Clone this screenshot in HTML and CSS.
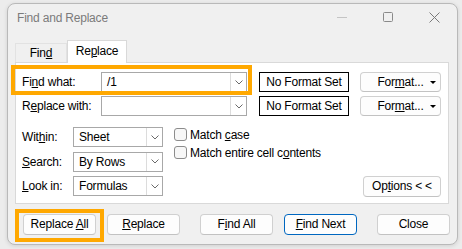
FILE: index.html
```html
<!DOCTYPE html>
<html lang="en">
<head>
    <meta charset="UTF-8">
    <title>Find and Replace</title>
    <link rel="stylesheet" href="styles.css">
</head>
<body>
    <div class="dialog">
        <div class="titlebar">
            <span class="title">Find and Replace</span>
            <div class="controls">
                <span class="ctl"><svg width="10" height="10" viewBox="0 0 10 10"><line x1="0" y1="5.5" x2="10" y2="5.5" stroke="#c4c4c4" stroke-width="1"/></svg></span>
                <span class="ctl"><svg width="10" height="10" viewBox="0 0 10 10"><rect x="0.5" y="0.5" width="9" height="9" rx="1" fill="none" stroke="#8a8a8a" stroke-width="1"/></svg></span>
                <span class="ctl"><svg width="11" height="11" viewBox="0 0 11 11"><path d="M0.5 0.5L10.5 10.5M10.5 0.5L0.5 10.5" stroke="#7a7a7a" stroke-width="1"/></svg></span>
            </div>
        </div>

        <div class="tabs">
            <div class="tab">Fin<u>d</u></div>
            <div class="tab active">Re<u>p</u>lace</div>
        </div>

        <div class="panel">
            <div class="row">
                <span class="label">Fi<u>n</u>d what:</span>
                <div class="combo wide">
                    <span class="value">/1</span>
                    <span class="drop"><svg width="8" height="5" viewBox="0 0 8 5"><path d="M0.5 0.5L4 4L7.5 0.5" fill="none" stroke="#6a6a6a" stroke-width="1"/></svg></span>
                </div>
                <div class="noformat">No Format Set</div>
                <div class="btn format">For<u>m</u>at...<span class="caret"></span></div>
            </div>
            <div class="row">
                <span class="label">R<u>e</u>place with:</span>
                <div class="combo wide">
                    <span class="value"></span>
                    <span class="drop"><svg width="8" height="5" viewBox="0 0 8 5"><path d="M0.5 0.5L4 4L7.5 0.5" fill="none" stroke="#6a6a6a" stroke-width="1"/></svg></span>
                </div>
                <div class="noformat">No Format Set</div>
                <div class="btn format">For<u>m</u>at...<span class="caret"></span></div>
            </div>

            <div class="options">
                <div class="selects">
                    <span class="label">Wit<u>h</u>in:</span>
                    <div class="combo">
                        <span class="value">Sheet</span>
                        <span class="drop"><svg width="8" height="5" viewBox="0 0 8 5"><path d="M0.5 0.5L4 4L7.5 0.5" fill="none" stroke="#6a6a6a" stroke-width="1"/></svg></span>
                    </div>
                    <span class="label"><u>S</u>earch:</span>
                    <div class="combo">
                        <span class="value">By Rows</span>
                        <span class="drop"><svg width="8" height="5" viewBox="0 0 8 5"><path d="M0.5 0.5L4 4L7.5 0.5" fill="none" stroke="#6a6a6a" stroke-width="1"/></svg></span>
                    </div>
                    <span class="label"><u>L</u>ook in:</span>
                    <div class="combo">
                        <span class="value">Formulas</span>
                        <span class="drop"><svg width="8" height="5" viewBox="0 0 8 5"><path d="M0.5 0.5L4 4L7.5 0.5" fill="none" stroke="#6a6a6a" stroke-width="1"/></svg></span>
                    </div>
                </div>
                <div class="checks">
                    <div class="check"><span class="box"></span><span>Match <u>c</u>ase</span></div>
                    <div class="check"><span class="box"></span><span>Match entire cell c<u>o</u>ntents</span></div>
                </div>
                <div class="btn opt">Op<u>t</u>ions &lt; &lt;</div>
            </div>
        </div>

        <div class="actions">
            <div class="btn action">Replace <u>A</u>ll</div>
            <div class="btn action gap-s"><u>R</u>eplace</div>
            <div class="btn action gap-l">F<u>i</u>nd All</div>
            <div class="btn action gap-s primary"><u>F</u>ind Next</div>
            <div class="btn action gap-l">Close</div>
        </div>

        <div class="mark mark-find"></div>
        <div class="mark mark-replace"></div>
    </div>
</body>
</html>
```

FILE: styles.css
```css
:root {
    --dialog-bg: #f0f0f0;
    --panel-border: #d9d9d9;
    --field-border: #a8a8a8;
    --btn-border: #d0d0d0;
    --accent: #0067c0;
    --mark: #ffa800;
}
body {
    margin: 0;
    width: 462px;
    height: 249px;
    overflow: hidden;
    background: #ececec;
    font-family: 'Liberation Sans', Arial, sans-serif;
    font-size: 12px;
    letter-spacing: -0.2px;
    color: #000;
}
u {
    text-decoration-thickness: 1px;
    text-underline-offset: 1px;
}
.dialog {
    position: relative;
    box-sizing: border-box;
    width: 451px;
    height: 242px;
    margin: 3px 0 0 7px;
    background: var(--dialog-bg);
    border: 1px solid #b9b9b9;
    border-radius: 8px;
    box-shadow: 0 1px 4px rgba(0, 0, 0, 0.12);
}
.titlebar {
    display: flex;
    align-items: center;
    height: 28px;
    padding-left: 9px;
}
.title {
    color: #7b7b7b;
    font-size: 12px;
}
.controls {
    display: flex;
    margin-left: auto;
    align-self: stretch;
}
.ctl {
    width: 46px;
    display: flex;
    align-items: center;
    justify-content: center;
    padding-bottom: 2px;
}
.tabs {
    display: flex;
    align-items: flex-end;
    height: 22px;
    margin-top: 8px;
    padding-left: 7px;
}
.tab {
    box-sizing: border-box;
    width: 52px;
    height: 19px;
    display: flex;
    align-items: center;
    justify-content: center;
    border: 1px solid #e2e2e2;
    border-bottom: none;
}
.tab.active {
    width: 60px;
    height: 23px;
    background: #fff;
    border-color: var(--panel-border);
    position: relative;
    top: 1px;
    padding-bottom: 2px;
}
.panel {
    box-sizing: border-box;
    width: 434px;
    height: 142px;
    margin-left: 7px;
    padding: 9px 7px 0 6px;
    background: #fff;
    border: 1px solid var(--panel-border);
}
.row {
    display: flex;
    align-items: center;
    height: 20px;
    margin-bottom: 4px;
}
.label {
    width: 79px;
}
.combo {
    box-sizing: border-box;
    display: flex;
    height: 20px;
    background: #fff;
    border: 1px solid var(--field-border);
}
.combo.wide {
    width: 146px;
}
.value {
    flex: 1;
    padding-left: 5px;
    line-height: 18px;
}
.drop {
    width: 15px;
    display: flex;
    align-items: center;
    justify-content: center;
    border-left: 1px solid #dcdcdc;
}
.noformat {
    box-sizing: border-box;
    width: 90px;
    height: 20px;
    margin-left: 12px;
    border: 1px solid #000;
    text-align: center;
    line-height: 18px;
    background: #fff;
}
.btn {
    box-sizing: border-box;
    text-align: center;
    line-height: 18px;
    background: #fdfdfd;
    border: 1px solid var(--btn-border);
    border-bottom-color: #c2c2c2;
    border-radius: 4px;
}
.format {
    position: relative;
    width: 81px;
    height: 20px;
    margin-left: 11px;
}
.caret {
    position: absolute;
    right: 4px;
    top: 8px;
    border-left: 3px solid transparent;
    border-right: 3px solid transparent;
    border-top: 3px solid #000;
}
.options {
    display: flex;
    margin-top: 11px;
}
.selects {
    display: grid;
    grid-template-columns: 51px 90px;
    grid-auto-rows: 20px;
    row-gap: 4.5px;
    align-items: center;
}
.selects .label {
    width: auto;
}
.checks {
    display: flex;
    flex-direction: column;
    gap: 3px;
    margin-left: 11px;
}
.check {
    display: flex;
    align-items: center;
    height: 15px;
}
.box {
    box-sizing: border-box;
    width: 13px;
    height: 13px;
    margin-right: 3px;
    border: 1px solid #8c8c8c;
    border-radius: 3px;
    background: #f7f7f7;
}
.opt {
    width: 78px;
    height: 21px;
    line-height: 19px;
    margin-left: auto;
    align-self: flex-end;
    margin-bottom: -1px;
}
.actions {
    display: flex;
    margin-top: 10px;
    padding-left: 15px;
}
.action {
    width: 73px;
    height: 21px;
    line-height: 19px;
}
.gap-s {
    margin-left: 11px;
}
.gap-l {
    margin-left: 20px;
}
.primary {
    border-color: var(--accent);
}
.mark {
    position: absolute;
    box-sizing: border-box;
    border: 4px solid var(--mark);
}
.mark-find {
    left: 3px;
    top: 61px;
    width: 241px;
    height: 30px;
}
.mark-replace {
    left: 7px;
    top: 205px;
    width: 89px;
    height: 33px;
}
```
